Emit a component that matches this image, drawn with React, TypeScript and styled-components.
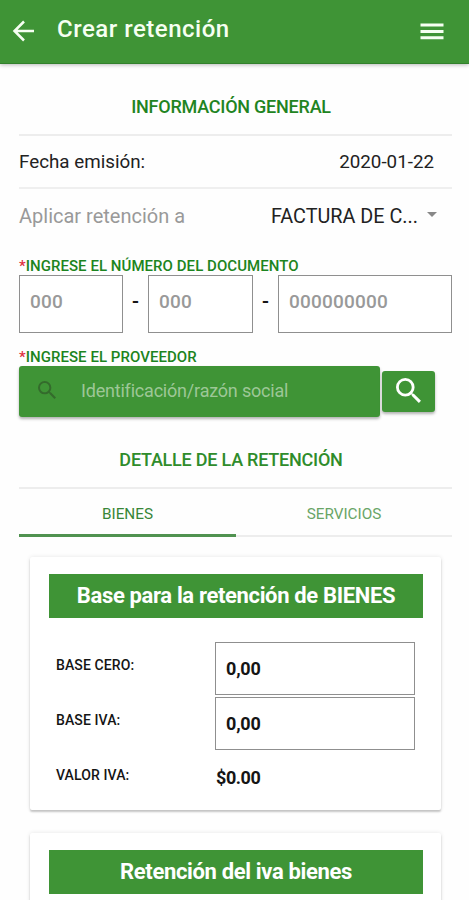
import React from "react";
import styled, { createGlobalStyle } from "styled-components";

const green = "#3f9436";

const GlobalStyle = createGlobalStyle`
  *, *::before, *::after { box-sizing: border-box; }
  html, body { margin: 0; height: 900px; overflow: hidden; background: #fefefe; }
  body { font-family: Roboto, "Liberation Sans", sans-serif; color: #151515; }
  input, button { font-family: inherit; margin: 0; }
`;

const Screen = styled.div`
  width: 469px;
  height: 900px;
  overflow: hidden;
  display: flex;
  flex-direction: column;
  white-space: nowrap;
`;

const Toolbar = styled.header`
  flex: none;
  height: 64px;
  background: ${green};
  border-bottom: 1px solid #32802c;
  box-shadow: 0 1px 4px rgba(0, 0, 0, 0.28);
  display: flex;
  align-items: flex-start;
  padding: 0 25px 0 12px;
  color: #f6fff2;
`;

const IconButton = styled.button<{ $top: number }>`
  display: flex;
  padding: 0;
  border: 0;
  background: none;
  color: inherit;
  margin-top: ${(p) => p.$top}px;
`;

const PageTitle = styled.h1`
  flex: 1;
  margin: 14px 0 0 22px;
  font-size: 24px;
  line-height: 30px;
  font-weight: 500;
  letter-spacing: 0.5px;
`;

const Content = styled.main`
  flex: 1;
  min-height: 0;
  padding: 0 17px 0 19px;
`;

const SectionTitle = styled.h2<{ $height: number; $pad: number; $color: string }>`
  margin: 0;
  height: ${(p) => p.$height}px;
  padding-top: ${(p) => p.$pad}px;
  padding-right: 9px;
  border-bottom: 2px solid #ededed;
  text-align: center;
  font-size: 18px;
  line-height: 24px;
  font-weight: 500;
  letter-spacing: -0.23px;
  color: ${(p) => p.$color};
`;

const InfoRow = styled.div<{ $height: number; $line?: boolean }>`
  height: ${(p) => p.$height}px;
  display: flex;
  align-items: center;
  justify-content: space-between;
  padding-right: ${(p) => (p.$line ? 18 : 15)}px;
  padding-bottom: ${(p) => (p.$line ? 0 : 1)}px;
  border-bottom: ${(p) => (p.$line ? "2px solid #efefef" : "0")};
`;

const RowText = styled.span<{ $size: number; $muted?: boolean }>`
  font-size: ${(p) => p.$size}px;
  color: ${(p) => (p.$muted ? "#999" : "#222")};
`;

const Select = styled.div`
  display: flex;
  align-items: center;
  gap: 9px;
`;

const Caret = styled.span`
  margin-top: -4px;
  border: 5px solid transparent;
  border-top-color: #888;
  border-bottom: 0;
`;

const FieldLabel = styled.label<{ $height: number; $pad: number }>`
  display: block;
  height: ${(p) => p.$height}px;
  padding-top: ${(p) => p.$pad}px;
  font-size: 15px;
  line-height: 18px;
  font-weight: 500;
  letter-spacing: 0.05px;
  color: #1c8420;
`;

const Required = styled.span`
  color: #e0303f;
`;

const DocumentNumber = styled.div`
  display: grid;
  grid-template-columns: 104px 25px 105px 25px 174px;
  height: 58px;
`;

const Dash = styled.span`
  text-align: center;
  font-size: 19px;
  line-height: 54px;
  font-weight: 700;
`;

const NumberInput = styled.input`
  min-width: 0;
  border: 1px solid #8f8f8f;
  border-radius: 0;
  background: #fff;
  padding: 0 0 5px 10px;
  font-size: 19px;
  font-weight: 500;
  letter-spacing: 0.2px;
  outline: 0;
  &::placeholder { color: #999; opacity: 1; }
`;

const SearchRow = styled.div`
  display: flex;
  align-items: center;
  gap: 2px;
  height: 50px;
  margin-bottom: 2px;
`;

const SearchBox = styled.div`
  width: 361px;
  height: 51px;
  display: flex;
  align-items: center;
  gap: 25px;
  padding: 0 0 2px 19px;
  border-radius: 3px;
  background: ${green};
  color: #346b2c;
  box-shadow: 0 2px 3px rgba(0, 0, 0, 0.3);
`;

const SearchInput = styled.input`
  width: 260px;
  border: 0;
  padding: 1px 0 0;
  outline: 0;
  background: transparent;
  color: #fff;
  font-size: 18px;
  letter-spacing: -0.2px;
  &::placeholder { color: #9dc796; opacity: 1; }
`;

const SearchButton = styled.button`
  width: 53px;
  height: 41px;
  padding: 0 1px 2px 0;
  display: flex;
  align-items: center;
  justify-content: center;
  border: 0;
  border-radius: 3px;
  background: ${green};
  color: #fff;
  box-shadow: 0 2px 3px rgba(0, 0, 0, 0.3);
`;

const Tabs = styled.nav`
  display: grid;
  grid-template-columns: 217px 216px;
  height: 48px;
`;

const Tab = styled.button<{ $active?: boolean }>`
  border: 0;
  border-bottom: ${(p) => (p.$active ? "3px solid #509250" : "2px solid #ededed")};
  background: none;
  padding: ${(p) => (p.$active ? "5px 0 0" : "4px 0 0")};
  font-size: 15.3px;
  color: ${(p) => (p.$active ? "#388638" : "#69a567")};
`;

const Card = styled.section<{ $height: number; $top: number }>`
  width: 411px;
  height: ${(p) => p.$height}px;
  margin: ${(p) => p.$top}px 0 0 11px;
  padding: 17px 18px 0 19px;
  border-radius: 2px;
  background: #fff;
  box-shadow: 0 2px 2px rgba(0, 0, 0, 0.2), 0 0 4px rgba(0, 0, 0, 0.1);
`;

const CardTitle = styled.h3`
  margin: 0 0 24px;
  height: 44px;
  background: ${green};
  color: #fff;
  text-align: center;
  font-size: 22px;
  line-height: 43px;
  font-weight: 700;
  letter-spacing: -0.35px;
`;

const AmountRow = styled.div`
  display: grid;
  grid-template-columns: 159px 200px;
  height: 55px;
  padding-left: 7px;
`;

const AmountLabel = styled.span`
  padding-top: 14px;
  font-size: 14px;
  line-height: 18px;
  font-weight: 500;
  letter-spacing: 0.1px;
`;

const AmountInput = styled.input`
  height: 53px;
  min-width: 0;
  border: 1px solid #8f8f8f;
  border-radius: 0;
  padding: 0 10px;
  outline: 0;
  background: #fff;
  color: #151515;
  font-size: 18px;
  font-weight: 700;
  letter-spacing: -0.2px;
`;

const Amount = styled.strong`
  padding: 14px 0 0 1px;
  font-size: 18px;
  line-height: 24px;
  font-weight: 700;
  letter-spacing: -0.45px;
`;

const SearchIcon = ({ size }: { size: number }) => (
  <svg width={size} height={size} viewBox="3 3 17.5 17.5" fill="currentColor">
    <path d="M15.5 14h-.79l-.28-.27A6.47 6.47 0 0 0 16 9.5 6.5 6.5 0 1 0 9.5 16c1.61 0 3.09-.59 4.23-1.57l.27.28v.79l5 4.99L20.49 19l-4.99-5zm-6 0C7.01 14 5 11.99 5 9.5S7.01 5 9.5 5 14 7.01 14 9.5 11.99 14 9.5 14z" />
  </svg>
);

export default function App() {
  return (
    <>
      <GlobalStyle />
      <Screen>
        <Toolbar>
          <IconButton $top={20} aria-label="Volver">
            <svg width="23" height="22" viewBox="0 0 23 22" fill="none" stroke="currentColor" strokeWidth="2.5">
              <path d="M22 11H3M12 1.5 2.5 11l9.5 9.5" />
            </svg>
          </IconButton>
          <PageTitle>Crear retención</PageTitle>
          <IconButton $top={23} aria-label="Menú">
            <svg width="24" height="17" viewBox="0 0 24 17" fill="currentColor">
              <path d="M.5 .5h23v3H.5zM.5 7h23v3H.5zM.5 13.3h23v3H.5z" />
            </svg>
          </IconButton>
        </Toolbar>
        <Content>
          <SectionTitle $height={72} $pad={31} $color="#1f8422">INFORMACIÓN GENERAL</SectionTitle>
          <InfoRow $height={53} $line>
            <RowText $size={18.8}>Fecha emisión:</RowText>
            <RowText $size={18.8}>2020-01-22</RowText>
          </InfoRow>
          <InfoRow $height={55}>
            <RowText $size={20} $muted>Aplicar retención a</RowText>
            <Select>
              <RowText $size={19.8}>FACTURA DE C...</RowText>
              <Caret />
            </Select>
          </InfoRow>
          <FieldLabel $height={31} $pad={13}>
            <Required>*</Required>INGRESE EL NÚMERO DEL DOCUMENTO
          </FieldLabel>
          <DocumentNumber>
            <NumberInput placeholder="000" />
            <Dash>-</Dash>
            <NumberInput placeholder="000" />
            <Dash>-</Dash>
            <NumberInput placeholder="000000000" />
          </DocumentNumber>
          <FieldLabel $height={33} $pad={15}>
            <Required>*</Required>INGRESE EL PROVEEDOR
          </FieldLabel>
          <SearchRow>
            <SearchBox>
              <SearchIcon size={18} />
              <SearchInput placeholder="Identificación/razón social" />
            </SearchBox>
            <SearchButton aria-label="Buscar">
              <SearchIcon size={25} />
            </SearchButton>
          </SearchRow>
          <SectionTitle $height={71} $pad={30} $color="#2f8c2b">DETALLE DE LA RETENCIÓN</SectionTitle>
          <Tabs>
            <Tab $active>BIENES</Tab>
            <Tab>SERVICIOS</Tab>
          </Tabs>
          <Card $height={253} $top={20}>
            <CardTitle>Base para la retención de BIENES</CardTitle>
            <AmountRow>
              <AmountLabel>BASE CERO:</AmountLabel>
              <AmountInput defaultValue="0,00" />
            </AmountRow>
            <AmountRow>
              <AmountLabel>BASE IVA:</AmountLabel>
              <AmountInput defaultValue="0,00" />
            </AmountRow>
            <AmountRow>
              <AmountLabel>VALOR IVA:</AmountLabel>
              <Amount>$0.00</Amount>
            </AmountRow>
          </Card>
          <Card $height={253} $top={23}>
            <CardTitle>Retención del iva bienes</CardTitle>
          </Card>
        </Content>
      </Screen>
    </>
  );
}
